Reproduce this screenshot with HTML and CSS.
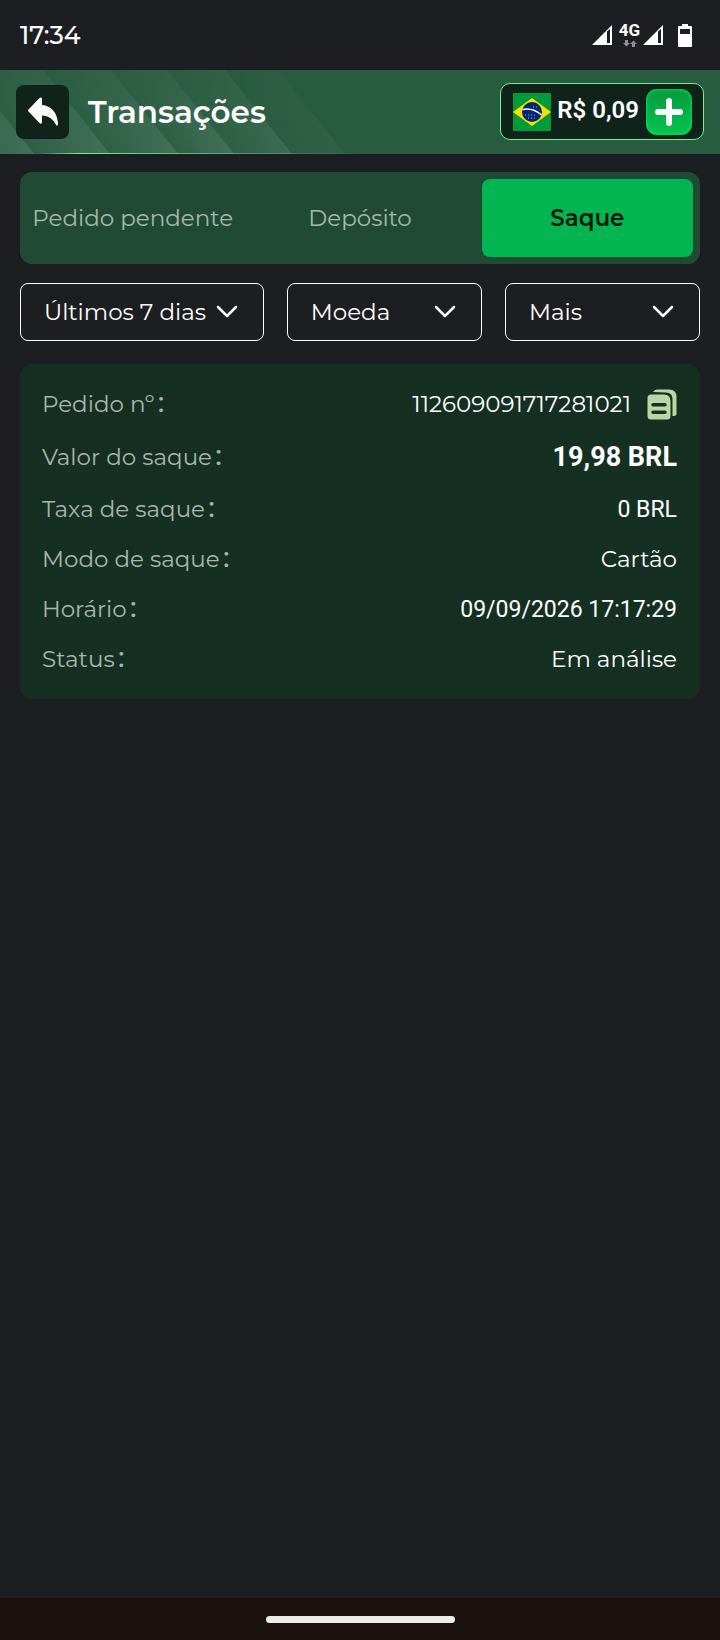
FILE: index.html
```
<!DOCTYPE html>
<html lang="pt-BR">
<head>
    <meta charset="UTF-8">
    <meta name="viewport" content="width=device-width, initial-scale=1.0">
    <title>Transações</title>
    <link rel="stylesheet" href="styles.css">
</head>
<body>
    <div class="status-bar">
        <span class="clock">17:34</span>
        <div class="status-icons">
            <svg class="signal" viewBox="0 0 20 20" width="20" height="20"><path fill="#fff" fill-rule="evenodd" d="M0 20L20 0V20ZM15 6.500V18H18V4Z"/></svg>
            <div class="network">
                <span>4G</span>
                <svg viewBox="0 0 14 7" width="14" height="7"><path fill="#8d8e90" d="M2 0H5V3H7L3.500 6.500L0 3H2ZM9 7H12V4H14L10.500 0.500L7 4H9Z"/></svg>
            </div>
            <svg class="signal" viewBox="0 0 20 20" width="20" height="20"><path fill="#fff" fill-rule="evenodd" d="M0 20L20 0V20ZM15 6.500V18H18V4Z"/></svg>
            <svg class="battery" viewBox="0 0 14 23" width="14" height="23"><path fill="#fff" fill-rule="evenodd" d="M4 0H10V2H13Q14 2 14 3V22Q14 23 13 23H1Q0 23 0 22V3Q0 2 1 2H4ZM2 5V10H12V5Z"/></svg>
        </div>
    </div>

    <header class="header">
        <svg class="stripes" viewBox="0 0 360 84" width="360" height="84" aria-hidden="true">
            <defs>
                <linearGradient id="stripe" x1="0" y1="0" x2="1" y2="0">
                    <stop offset="0" stop-color="#fff" stop-opacity="0.03"/>
                    <stop offset="1" stop-color="#fff" stop-opacity="0.13"/>
                </linearGradient>
            </defs>
            <g fill="url(#stripe)">
                <rect transform="skewX(38.6)" x="-110" width="77" height="84"/>
                <rect transform="skewX(38.6)" x="-33" width="76" height="84"/>
                <rect transform="skewX(38.6)" x="43" width="68" height="84"/>
                <rect transform="skewX(38.6)" x="111" width="56" height="84"/>
                <rect transform="skewX(38.6)" x="167" width="58" height="84" opacity="0.800"/>
                <rect transform="skewX(38.6)" x="225" width="53" height="84" opacity="0.300"/>
            </g>
        </svg>
        <button class="back" type="button" aria-label="Voltar">
            <svg viewBox="0 0 30 30" width="30" height="30"><path fill="#fff" d="M0.500 12.500L11.500 1Q14 -0.500 14 2V8Q28 9.500 30 26Q30 29.500 28.500 28.500Q23 18 14 18.500V24.500Q14 28 11.500 26L0.500 14.500Q-0.400 13.500 0.500 12.500Z"/></svg>
        </button>
        <h1>Transações</h1>
        <div class="balance">
            <svg viewBox="0 0 38 38" width="38" height="38" role="img" aria-label="Brasil">
                <rect width="38" height="38" fill="#009b3a"/>
                <path fill="#fedf00" d="M0 19L19 5L38 19L19 33Z"/>
                <circle cx="19" cy="19" r="10" fill="#002776"/>
                <path fill="none" stroke="#fff" stroke-width="1.500" d="M9.500 16.500Q20 14.500 28.500 22"/>
                <path stroke="#9fb0d0" stroke-width="1" stroke-dasharray="1 2" d="M12 22H24M15 25H23M20 14H24"/>
            </svg>
            <span class="amount">R$ 0,09</span>
            <button class="add" type="button" aria-label="Adicionar saldo">
                <svg viewBox="0 0 28 28" width="28" height="28"><path stroke="#fff" stroke-width="6" stroke-linecap="round" d="M14 3V25M3 14H25"/></svg>
            </button>
        </div>
    </header>

    <main class="content">
        <nav class="tabs">
            <button class="tab" type="button">Pedido pendente</button>
            <button class="tab" type="button">Depósito</button>
            <button class="tab active" type="button">Saque</button>
        </nav>

        <div class="filters">
            <select aria-label="Período"><option>Últimos 7 dias</option></select>
            <select aria-label="Moeda"><option>Moeda</option></select>
            <select aria-label="Mais filtros"><option>Mais</option></select>
        </div>

        <dl class="card">
            <div class="row">
                <dt>Pedido nº<span class="colon">:</span></dt>
                <dd class="order">112609091717281021
                    <button class="copy" type="button" aria-label="Copiar">
                        <svg viewBox="0 0 30 31" width="30" height="31">
                            <path fill="#b9d7a4" d="M6 3Q7.500 0.500 10 0.500H22Q29.500 0.500 29.500 8V25Q29.500 27 25.500 27V10Q25.500 3.500 19 3.500Z"/>
                            <path fill="#b9d7a4" fill-rule="evenodd" d="M4 5.500H17Q23.500 5.500 23.500 12V27Q23.500 30.500 20 30.500H4Q0.500 30.500 0.500 27V9Q0.500 5.500 4 5.500ZM6 14A1.500 1.500 0 0 0 6 17.500H18A1.500 1.500 0 0 0 18 14ZM6 21.500A1.500 1.500 0 0 0 6 25H18A1.500 1.500 0 0 0 18 21.500Z"/>
                        </svg>
                    </button>
                </dd>
            </div>
            <div class="row total">
                <dt>Valor do saque<span class="colon">:</span></dt>
                <dd>19,98 BRL</dd>
            </div>
            <div class="row">
                <dt>Taxa de saque<span class="colon">:</span></dt>
                <dd class="number">0 BRL</dd>
            </div>
            <div class="row">
                <dt>Modo de saque<span class="colon">:</span></dt>
                <dd>Cartão</dd>
            </div>
            <div class="row">
                <dt>Horário<span class="colon">:</span></dt>
                <dd class="number">09/09/2026 17:17:29</dd>
            </div>
            <div class="row">
                <dt>Status<span class="colon">:</span></dt>
                <dd>Em análise</dd>
            </div>
        </dl>
    </main>

    <footer class="nav-bar"><span class="pill"></span></footer>
</body>
</html>
```
FILE: styles.css
```
* {
    box-sizing: border-box;
}

body {
    margin: 0;
    min-height: 100vh;
    display: flex;
    flex-direction: column;
    background: #1d1e22;
    color: #fff;
    font-family: Montserrat, Inter, sans-serif;
    font-size: 23px;
}

button, select {
    font: inherit;
    color: inherit;
    border: none;
    padding: 0;
    margin: 0;
    cursor: pointer;
}

svg {
    display: block;
}

.status-bar {
    height: 70px;
    padding: 0 28px 0 20px;
    display: flex;
    align-items: center;
    justify-content: space-between;
}

.clock {
    font-size: 25px;
    font-weight: 500;
}

.status-icons {
    display: flex;
    align-items: center;
}

.network {
    display: flex;
    flex-direction: column;
    align-items: center;
    gap: 3px;
    width: 31px;
    padding-left: 4px;
    font-family: Roboto, sans-serif;
    font-size: 17px;
    font-weight: 700;
    line-height: 14px;
}

.battery {
    margin-left: 15px;
}

.header {
    position: relative;
    height: 84px;
    padding: 0 16px;
    display: flex;
    align-items: center;
    background: #285c41;
}

/* glowing line under the header */
.header::after {
    content: "";
    position: absolute;
    left: 0;
    bottom: 0;
    width: 50%;
    height: 1px;
    background: linear-gradient(90deg, transparent 10%, #6cf58c 22%, transparent);
}

.stripes {
    position: absolute;
    left: 0;
    top: 0;
    mask-image: linear-gradient(rgba(0, 0, 0, 0.3), #000);
}

.back {
    position: relative;
    width: 53px;
    height: 54px;
    border-radius: 8px;
    background: #10231a;
    display: flex;
    align-items: center;
    justify-content: center;
}

h1 {
    position: relative;
    margin: 0 auto 0 19px;
    font-size: 31px;
    line-height: 38px;
    font-weight: 600;
}

.balance {
    height: 57px;
    margin-bottom: 2px;
    padding: 2px 11px 0 12px;
    display: flex;
    align-items: center;
    border: 1px solid #6cf58c;
    border-radius: 10px;
    background: #10231a;
}

.amount {
    margin: 0 7px 4px 6px;
    font-family: Roboto, sans-serif;
    font-size: 24px;
    font-weight: 600;
}

.add {
    width: 46px;
    height: 46px;
    border-radius: 11px;
    background: linear-gradient(#069a3c, #04c44e);
    box-shadow: inset 0 0 4px #00f068;
    display: flex;
    align-items: center;
    justify-content: center;
}

.content {
    flex: 1;
    padding: 18px 20px;
}

.tabs {
    height: 92px;
    padding: 7px;
    display: grid;
    grid-template-columns: 1fr 1fr 1fr;
    gap: 16px;
    border-radius: 12px;
    background: #214a35;
}

.tab {
    background: none;
    border-radius: 8px;
    color: #a6b7ae;
    white-space: nowrap;
}

.tab.active {
    background: #03b550;
    color: #041a0d;
    font-weight: 600;
}

.filters {
    margin: 19px 0 23px;
    display: grid;
    grid-template-columns: 5fr 4fr 4fr;
    gap: 23px;
}

.filters select {
    height: 58px;
    padding: 0 23px;
    border: 1px solid #fff;
    border-radius: 8px;
    appearance: none;
    background: url("data:image/svg+xml,%3Csvg xmlns='http://www.w3.org/2000/svg' width='22' height='13' fill='none' stroke='white' stroke-width='2.500' stroke-linecap='round' stroke-linejoin='round'%3E%3Cpath d='M2 2L11 11L20 2'/%3E%3C/svg%3E") no-repeat right 25px top 21px;
}

.card {
    margin: 0;
    padding: 15px 23px 15px 22px;
    border-radius: 12px;
    background: #153022;
}

.row {
    height: 50px;
    display: flex;
    align-items: center;
    justify-content: space-between;
}

.row dt {
    color: #aab5ae;
}

.row dd {
    margin: 0;
}

.colon {
    margin-left: 3px;
    font-family: Roboto, sans-serif;
    font-size: 27px;
    font-weight: 500;
    line-height: 23px;
}

.order {
    display: flex;
    align-items: center;
    gap: 16px;
}

.copy {
    background: none;
}

.number {
    font-family: Roboto, sans-serif;
    font-size: 23px;
}

.total {
    height: 55px;
}

.total dd {
    font-family: Roboto, sans-serif;
    font-size: 27px;
    font-weight: 700;
}

.nav-bar {
    height: 42px;
    display: flex;
    align-items: center;
    justify-content: center;
    background: #1b110f;
}

.pill {
    width: 189px;
    height: 7px;
    border-radius: 4px;
    background: #ececec;
}
```
